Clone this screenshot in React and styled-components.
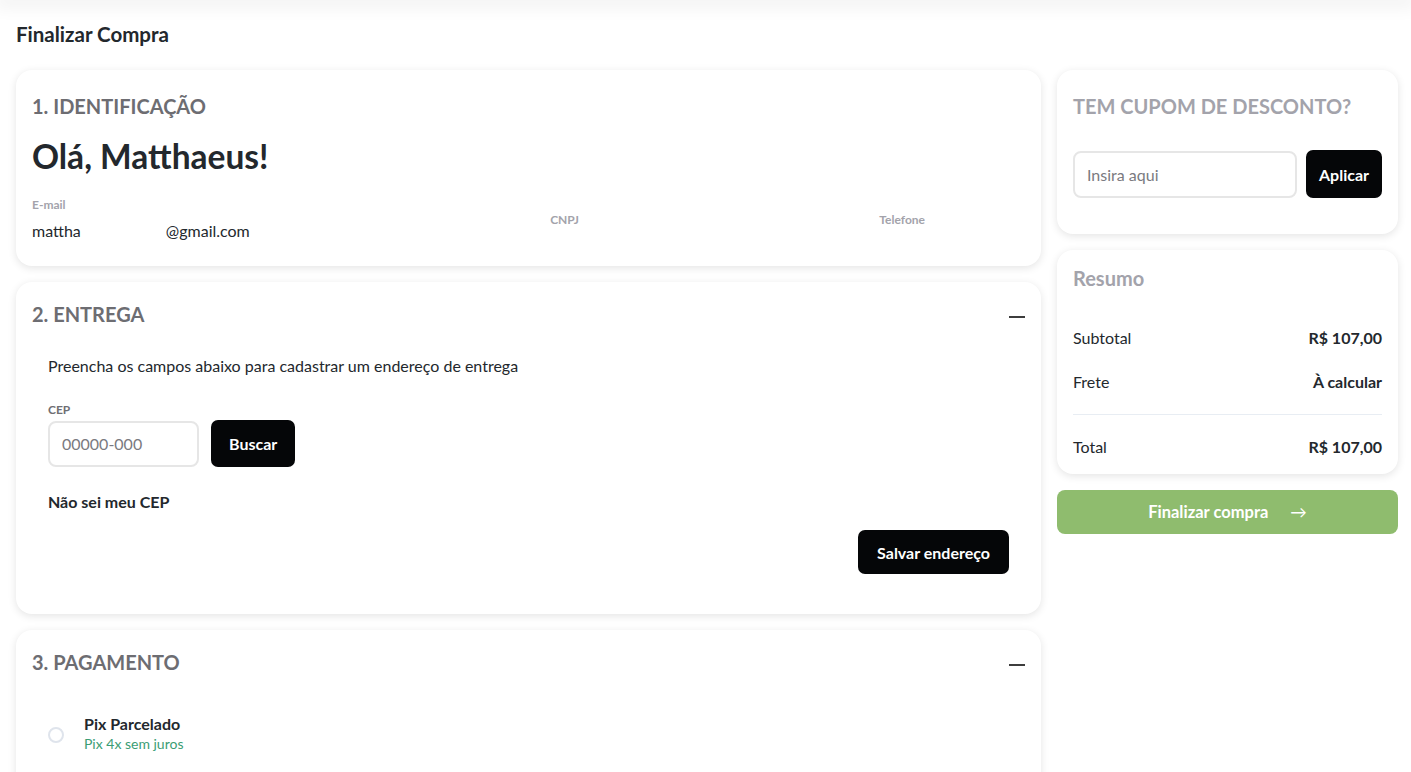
import React from "react";
import styled, { createGlobalStyle } from "styled-components";

const GlobalStyle = createGlobalStyle`
  * { box-sizing: border-box; }
  body {
    margin: 0;
    background: #fff;
    font-family: Lato, "Open Sans", "Liberation Sans", sans-serif;
    color: #23282d;
  }
`;

const TopShade = styled.div`
  height: 0;
  box-shadow: 0 0 18px 6px rgba(0, 0, 0, 0.07);
`;

const Page = styled.div`
  padding: 20px 13px 0 16px;
`;

const PageTitle = styled.h1`
  margin: 0 0 22px;
  font-size: 20.5px;
  line-height: 28px;
  font-weight: 700;
  color: #23282d;
`;

const Layout = styled.div`
  display: grid;
  grid-template-columns: 1fr 341px;
  gap: 16px;
  align-items: start;
`;

const Column = styled.div`
  display: flex;
  flex-direction: column;
  gap: 16px;
`;

const Card = styled.section`
  background: #fff;
  border-radius: 16px;
  box-shadow: 0 2px 8px rgba(0, 0, 0, 0.11);
  padding: ${(p) => p.$pad || "22px 16px 24px"};
`;

const SectionHead = styled.div`
  display: flex;
  align-items: center;
  justify-content: space-between;
`;

const SectionTitle = styled.h2`
  margin: 0;
  font-size: 20px;
  line-height: 28px;
  font-weight: 700;
  color: ${(p) => p.$color || "#6d6d72"};
`;

const Minus = styled.span`
  width: 16px;
  height: 2px;
  background: #3d3d3d;
  margin-top: 6px;
`;

const Greeting = styled.div`
  margin-top: 16px;
  font-size: 33.5px;
  line-height: 40px;
  font-weight: 700;
  color: #23282d;
`;

const InfoRow = styled.div`
  display: flex;
  align-items: center;
  justify-content: space-between;
  padding-right: 100px;
  margin-top: 22px;
`;

const Field = styled.div`
  display: flex;
  flex-direction: column;
  gap: 9px;
`;

const SmallLabel = styled.span`
  font-size: 12px;
  line-height: 14px;
  font-weight: 700;
  color: ${(p) => (p.$dark ? "#6e6e73" : "#a3a3ab")};
`;

const Value = styled.span`
  font-size: 16px;
  line-height: 20px;
  color: #23282d;
`;

const Hidden = styled.span`
  display: inline-block;
  width: 85px;
`;

const Body = styled.div`
  padding: 28px 16px 0;
`;

const Text = styled.p`
  margin: 0;
  font-size: 16px;
  line-height: 20px;
  color: #23282d;
`;

const CepGroup = styled.div`
  margin-top: 27px;
  display: flex;
  flex-direction: column;
  gap: 3px;
`;

const InputRow = styled.div`
  display: flex;
  align-items: center;
  gap: ${(p) => p.$gap || "12px"};
  margin-top: ${(p) => p.$mt || "0"};
`;

const Input = styled.input`
  width: ${(p) => p.$w};
  height: ${(p) => p.$h || "47px"};
  border: 2px solid #e6e6e6;
  border-radius: 8px;
  padding: 0 12px;
  font-family: inherit;
  font-size: 16px;
  color: #23282d;
  outline: none;
  &::placeholder {
    color: #7a7a80;
  }
`;

const DarkButton = styled.button`
  height: ${(p) => p.$h || "47px"};
  padding: 0 ${(p) => p.$px || "17px"};
  background: #050608;
  color: #fff;
  border: none;
  border-radius: 7px;
  font-family: inherit;
  font-size: 16px;
  font-weight: 700;
  cursor: pointer;
`;

const BoldLink = styled.div`
  margin-top: 25px;
  font-size: 16px;
  line-height: 20px;
  font-weight: 700;
  color: #23282d;
`;

const Actions = styled.div`
  display: flex;
  justify-content: flex-end;
  margin-top: 18px;
`;

const PayOption = styled.label`
  display: flex;
  align-items: center;
  gap: 20px;
  padding: 37px 16px 0;
`;

const Radio = styled.span`
  width: 16px;
  height: 16px;
  border-radius: 50%;
  border: 2px solid #dfe4ec;
  margin-top: 2px;
`;

const PayText = styled.div`
  display: flex;
  flex-direction: column;
`;

const PayName = styled.span`
  font-size: 16px;
  line-height: 21px;
  font-weight: 700;
  color: #23282d;
`;

const PayNote = styled.span`
  font-size: 14px;
  line-height: 20px;
  color: #3b9d74;
`;

const SummaryRows = styled.div`
  margin-top: 23px;
  display: flex;
  flex-direction: column;
`;

const SummaryRow = styled.div`
  display: flex;
  justify-content: space-between;
  align-items: center;
  height: 44px;
  font-size: 16px;
`;

const SumLabel = styled.span`
  color: #23282d;
`;

const SumValue = styled.span`
  font-weight: 700;
  color: #23282d;
`;

const Divider = styled.hr`
  border: none;
  border-top: 1px solid #e8edf3;
  margin: 11px 0 9px;
`;

const CheckoutButton = styled.button`
  height: 44px;
  width: 100%;
  border: none;
  border-radius: 8px;
  background: #8fbc6e;
  color: #fff;
  font-family: inherit;
  font-size: 16.5px;
  font-weight: 700;
  display: flex;
  align-items: center;
  justify-content: center;
  gap: 22px;
`;

function App() {
  return (
    <>
      <GlobalStyle />
      <TopShade />
      <Page>
        <PageTitle>Finalizar Compra</PageTitle>
        <Layout>
          <Column>
            <Card $pad="22px 16px 25px">
              <SectionTitle>1. IDENTIFICAÇÃO</SectionTitle>
              <Greeting>Olá, Matthaeus!</Greeting>
              <InfoRow>
                <Field>
                  <SmallLabel>E-mail</SmallLabel>
                  <Value>
                    mattha<Hidden />@gmail.com
                  </Value>
                </Field>
                <Field>
                  <SmallLabel>CNPJ</SmallLabel>
                </Field>
                <Field>
                  <SmallLabel>Telefone</SmallLabel>
                </Field>
              </InfoRow>
            </Card>

            <Card $pad="18px 16px 40px">
              <SectionHead>
                <SectionTitle>2. ENTREGA</SectionTitle>
                <Minus />
              </SectionHead>
              <Body>
                <Text>Preencha os campos abaixo para cadastrar um endereço de entrega</Text>
                <CepGroup>
                  <SmallLabel $dark>CEP</SmallLabel>
                  <InputRow>
                    <Input $w="151px" $h="46px" placeholder="00000-000" />
                    <DarkButton $h="47px" $px="18px">Buscar</DarkButton>
                  </InputRow>
                </CepGroup>
                <BoldLink>Não sei meu CEP</BoldLink>
                <Actions>
                  <DarkButton $h="44px" $px="19px">Salvar endereço</DarkButton>
                </Actions>
              </Body>
            </Card>

            <Card $pad="18px 16px 40px">
              <SectionHead>
                <SectionTitle>3. PAGAMENTO</SectionTitle>
                <Minus />
              </SectionHead>
              <PayOption>
                <Radio />
                <PayText>
                  <PayName>Pix Parcelado</PayName>
                  <PayNote>Pix 4x sem juros</PayNote>
                </PayText>
              </PayOption>
            </Card>
          </Column>

          <Column>
            <Card $pad="22px 16px 36px">
              <SectionTitle $color="#a3a3ab">TEM CUPOM DE DESCONTO?</SectionTitle>
              <InputRow $gap="9px" $mt="30px">
                <Input $w="224px" $h="47px" placeholder="Insira aqui" />
                <DarkButton $h="48px" $px="13px">Aplicar</DarkButton>
              </InputRow>
            </Card>

            <Card $pad="14px 16px 6px">
              <SectionTitle $color="#a3a3ab">Resumo</SectionTitle>
              <SummaryRows>
                <SummaryRow>
                  <SumLabel>Subtotal</SumLabel>
                  <SumValue>R$ 107,00</SumValue>
                </SummaryRow>
                <SummaryRow>
                  <SumLabel>Frete</SumLabel>
                  <SumValue>À calcular</SumValue>
                </SummaryRow>
                <Divider />
                <SummaryRow>
                  <SumLabel>Total</SumLabel>
                  <SumValue>R$ 107,00</SumValue>
                </SummaryRow>
              </SummaryRows>
            </Card>

            <CheckoutButton>
              Finalizar compra
              <span style={{ fontWeight: 400 }}>→</span>
            </CheckoutButton>
          </Column>
        </Layout>
      </Page>
    </>
  );
}

export default App;
